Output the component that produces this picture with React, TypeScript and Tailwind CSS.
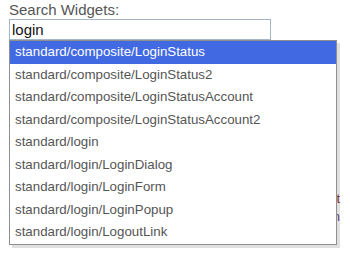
import { useState } from 'react';

const results = [
  'standard/composite/LoginStatus',
  'standard/composite/LoginStatus2',
  'standard/composite/LoginStatusAccount',
  'standard/composite/LoginStatusAccount2',
  'standard/login',
  'standard/login/LoginDialog',
  'standard/login/LoginForm',
  'standard/login/LoginPopup',
  'standard/login/LogoutLink',
];

export default function App() {
  const [query, setQuery] = useState('login');
  const [active, setActive] = useState(0);

  return (
    <div className="w-[350px] h-[265px] bg-white pl-[9px] pt-px font-['Liberation_Sans',Arial,sans-serif]">
      <div className="relative w-[331px]">
        <label className="block text-[15px] leading-[18px] text-[#555]">Search Widgets:</label>

        <input
          value={query}
          onChange={(e) => setQuery(e.target.value)}
          className="block w-[262px] h-[21px] px-[2px] border border-[#a3b6ca] text-[15px] leading-[19px] text-[#111] outline-none"
        />

        {/* text underneath the popup, peeks out at the right edge */}
        <div className="flex flex-col items-end pt-[150px] text-[13px] leading-[18px]">
          <span className="text-[#8a3b3b]">t</span>
          <span className="text-[#6b4a8c]">n</span>
        </div>

        {/* Suggestions popup */}
        <ul className="absolute left-0 top-[39px] w-[328px] bg-white border border-[#8f8f8f] shadow-[3px_3px_0_rgba(0,0,0,0.12)]">
          {results.map((item, i) => (
            <li
              key={item}
              onMouseEnter={() => setActive(i)}
              className={
                i === active
                  ? 'h-[22.5px] flex items-center pl-[5px] text-[13.3px] bg-[#4169e1] text-white cursor-default'
                  : 'h-[22.5px] flex items-center pl-[5px] text-[13.3px] text-[#555] cursor-default'
              }
            >
              {item}
            </li>
          ))}
        </ul>
      </div>
    </div>
  );
}
